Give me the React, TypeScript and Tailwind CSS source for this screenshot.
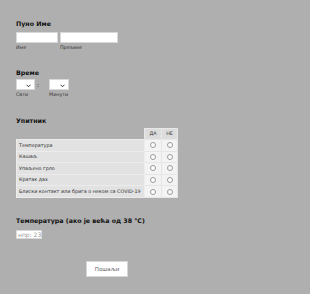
import React from "react";

const rows = [
  "Температура",
  "Кашаљ",
  "Упаљено грло",
  "Кратак дах",
  "Блиски контакт или брига о неком са COVID-19",
];

function Chevron() {
  return (
    <svg width="5" height="4" viewBox="0 0 10 8" className="absolute right-[3px] top-[4px]">
      <path d="M1 1.5 L5 5.5 L9 1.5" fill="none" stroke="#333" strokeWidth="2" />
    </svg>
  );
}

function Radio() {
  return <span className="inline-block w-[6px] h-[6px] rounded-full border border-[#999] bg-white" />;
}

export default function App() {
  return (
    <div
      className="w-[310px] h-[294px] bg-[#afafaf] pl-[16px] pt-[19px] text-[#111]"
      style={{ fontFamily: '"DejaVu Sans", Verdana, sans-serif' }}
    >
      {/* Full name */}
      <h2 className="text-[6.3px] font-bold leading-[9px]">Пуно Име</h2>
      <div className="mt-[4px] flex gap-[2px]">
        <div className="flex flex-col">
          <div className="w-[42px] h-[11px] bg-white border border-[#d8d8d8]" />
          <span className="mt-[2px] text-[4.8px] leading-[5px] text-[#333]">Име</span>
        </div>
        <div className="flex flex-col">
          <div className="w-[58px] h-[11px] bg-white border border-[#d8d8d8]" />
          <span className="mt-[2px] text-[4.8px] leading-[5px] text-[#333]">Презиме</span>
        </div>
      </div>

      {/* Time */}
      <h2 className="mt-[18px] text-[6.3px] font-bold leading-[9px]">Време</h2>
      <div className="mt-[2px] flex items-start">
        <div className="flex flex-col">
          <div className="relative w-[19px] h-[11px] bg-white border border-[#d8d8d8]">
            <Chevron />
          </div>
          <span className="mt-[2px] text-[4.8px] leading-[5px] text-[#333]">Сати</span>
        </div>
        <span className="ml-[2px] w-[12px] text-left text-[6px] leading-[11px]">:</span>
        <div className="flex flex-col">
          <div className="relative w-[20px] h-[11px] bg-white border border-[#d8d8d8]">
            <Chevron />
          </div>
          <span className="mt-[2px] text-[4.8px] leading-[5px] text-[#333]">Минути</span>
        </div>
      </div>

      {/* Questionnaire */}
      <h2 className="mt-[19px] text-[6.3px] font-bold leading-[9px]">Упитник</h2>
      <table className="mt-[3px] border-collapse text-[4.85px] text-[#333]">
        <thead>
          <tr className="h-[11px]">
            <th className="w-[128px] p-0" />
            <th className="w-[17px] p-0 bg-[#dcdcdc] font-normal border border-[#e8e8e8]">ДА</th>
            <th className="w-[16px] p-0 bg-[#dcdcdc] font-normal border border-[#e8e8e8]">НЕ</th>
          </tr>
        </thead>
        <tbody>
          {rows.map((r) => (
            <tr key={r} className="h-[11.6px]">
              <td className="p-0 pl-[2px] bg-[#e2e2e2] border border-[#ececec] text-left whitespace-nowrap">{r}</td>
              <td className="p-0 bg-[#f3f3f3] border border-[#e6e6e6] text-center align-middle">
                <div className="flex justify-center"><Radio /></div>
              </td>
              <td className="p-0 bg-[#f3f3f3] border border-[#e6e6e6] text-center align-middle">
                <div className="flex justify-center"><Radio /></div>
              </td>
            </tr>
          ))}
        </tbody>
      </table>

      {/* Temperature */}
      <h2 className="mt-[18px] text-[6.3px] font-bold leading-[9px]">Температура (ако је већа од 38 °C)</h2>
      <div className="mt-[5px] w-[26px] h-[9px] bg-white border border-[#d8d8d8] overflow-hidden text-[6px] leading-[7px] text-[#999] pl-[1px] whitespace-nowrap">
        нпр: 23
      </div>

      <div className="mt-[22px] flex">
        <button className="ml-[70px] w-[42px] h-[16px] bg-white border border-[#d6d6d6] text-[5.5px] text-[#666]">
          Пошаљи
        </button>
      </div>
    </div>
  );
}
